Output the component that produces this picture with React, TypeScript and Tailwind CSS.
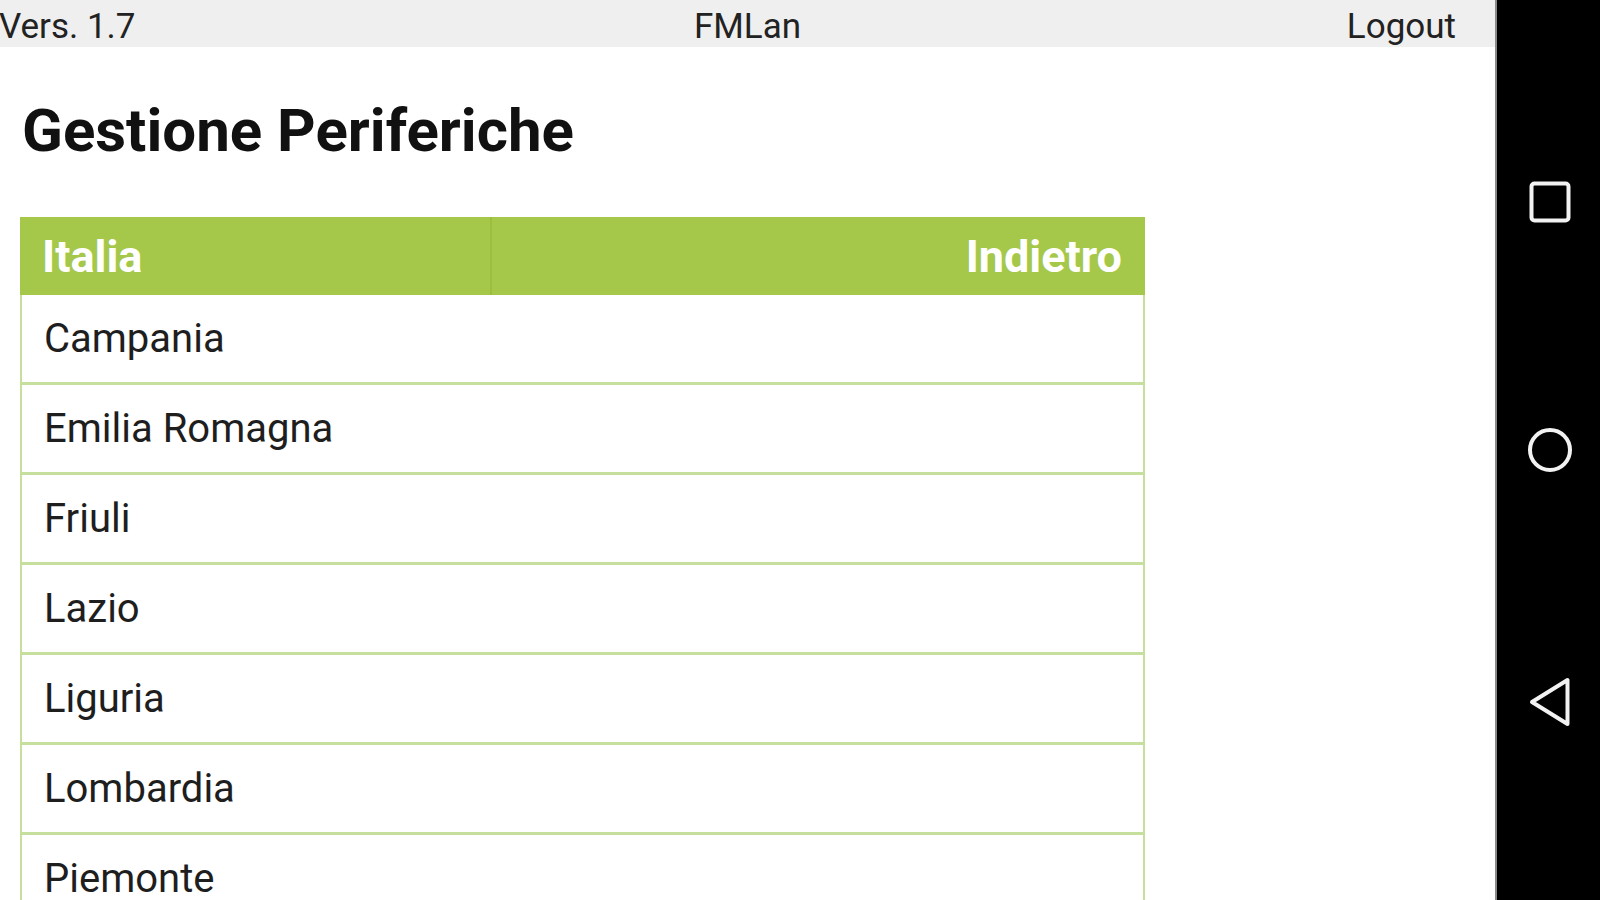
import React from "react";

const regioni = ["Campania", "Emilia Romagna", "Friuli", "Lazio", "Liguria", "Lombardia", "Piemonte"];

function NavBar() {
  return (
    <div className="flex h-full w-[105px] shrink-0 flex-col items-center border-l-2 border-[#8a8a8a] bg-black pt-[181px]">
      <svg width="42" height="42" viewBox="0 0 42 42" className="ml-[2px]">
        <rect x="2.5" y="2.5" width="37" height="37" rx="3" fill="none" stroke="#f2f2f2" strokeWidth="4" />
      </svg>
      <svg width="46" height="46" viewBox="0 0 46 46" className="mt-[204px] ml-[2px]">
        <circle cx="23" cy="23" r="20" fill="none" stroke="#f2f2f2" strokeWidth="4" />
      </svg>
      <svg width="44" height="50" viewBox="0 0 44 50" className="mt-[204px] ml-[2px]">
        <path d="M39.5 3 L39.5 47 L4 25 Z" fill="none" stroke="#f2f2f2" strokeWidth="4" strokeLinejoin="round" />
      </svg>
    </div>
  );
}

export default function App() {
  return (
    <div
      className="flex h-[900px] w-[1600px] overflow-hidden bg-white text-[#1e1e1e]"
      style={{ fontFamily: "Roboto, 'Liberation Sans', sans-serif" }}
    >
      <div className="flex min-w-0 flex-1 flex-col">
        <div className="grid h-[47px] shrink-0 grid-cols-3 items-center bg-[#efefef] pt-[5px] text-[35px] leading-none text-[#222]">
          <span className="-ml-[1px]">Vers. 1.7</span>
          <span className="text-center">FMLan</span>
          <span className="pr-[39px] text-right">Logout</span>
        </div>

        <h1 className="mt-[54px] pl-[22px] text-[60px] font-bold leading-none text-[#111]">Gestione Periferiche</h1>

        <div className="mt-[56px] ml-[20px] w-[1125px]">
          <div className="flex h-[78px] bg-[#a6c84a] text-[45px] font-bold leading-none text-white">
            <div className="flex w-[472px] items-center border-r-2 border-[#9bbf3d] pl-[22px]">Italia</div>
            <div className="flex flex-1 items-center justify-end pr-[23px]">Indietro</div>
          </div>
          {regioni.map(r => (
            <div
              key={r}
              className="flex h-[90px] items-center border-x-2 border-b-[3px] border-[#c6df9c] pl-[22px] text-[40px] leading-none text-[#1e1e1e]"
            >
              {r}
            </div>
          ))}
        </div>
      </div>
      <NavBar />
    </div>
  );
}
